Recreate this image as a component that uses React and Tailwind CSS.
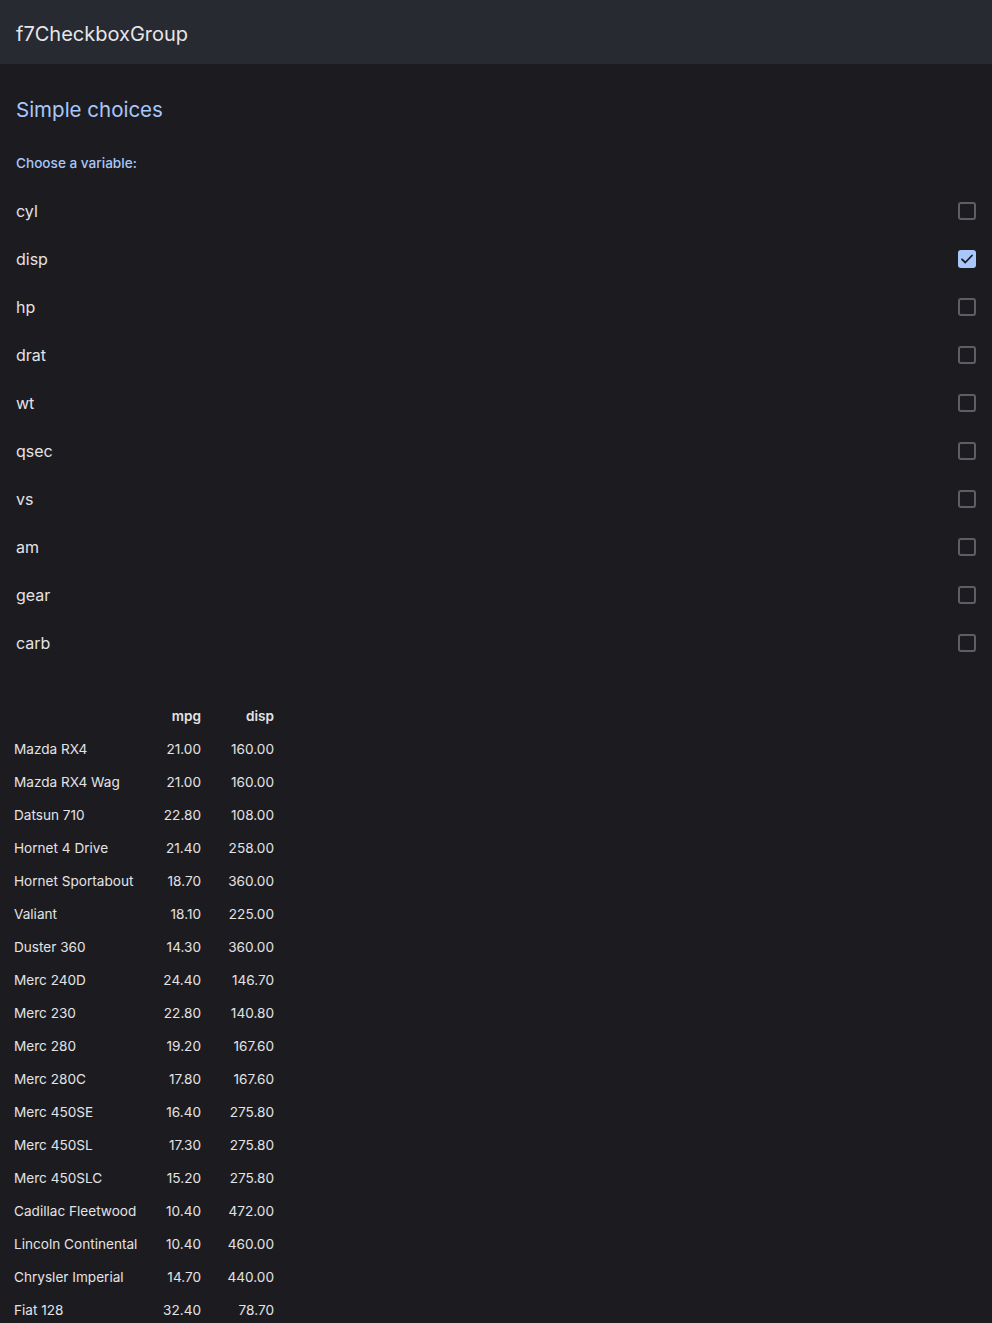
import React from 'react';

const vars = ['cyl', 'disp', 'hp', 'drat', 'wt', 'qsec', 'vs', 'am', 'gear', 'carb'];

const cars = [
  ['Mazda RX4', '21.00', '160.00'],
  ['Mazda RX4 Wag', '21.00', '160.00'],
  ['Datsun 710', '22.80', '108.00'],
  ['Hornet 4 Drive', '21.40', '258.00'],
  ['Hornet Sportabout', '18.70', '360.00'],
  ['Valiant', '18.10', '225.00'],
  ['Duster 360', '14.30', '360.00'],
  ['Merc 240D', '24.40', '146.70'],
  ['Merc 230', '22.80', '140.80'],
  ['Merc 280', '19.20', '167.60'],
  ['Merc 280C', '17.80', '167.60'],
  ['Merc 450SE', '16.40', '275.80'],
  ['Merc 450SL', '17.30', '275.80'],
  ['Merc 450SLC', '15.20', '275.80'],
  ['Cadillac Fleetwood', '10.40', '472.00'],
  ['Lincoln Continental', '10.40', '460.00'],
  ['Chrysler Imperial', '14.70', '440.00'],
  ['Fiat 128', '32.40', '78.70'],
  ['Honda Civic', '30.40', '75.70'],
];

function Checkbox({ checked }) {
  if (checked) {
    return (
      <span className="w-[18px] h-[18px] rounded-[3px] bg-[#a8c7fa] flex items-center justify-center">
        <svg width="16" height="16" viewBox="0 0 16 16" fill="none">
          <path d="M3 8.3l3.3 3.2 6.7-7" stroke="#1b1b1f" strokeWidth="1.8" strokeLinecap="round" strokeLinejoin="round" />
        </svg>
      </span>
    );
  }
  return <span className="w-[18px] h-[18px] rounded-[3px] border-2 border-[#5e5f64]" />;
}

export default function App() {
  return (
    <div className="min-h-screen bg-[#1c1c20] text-[#e3e3e6]" style={{ fontFamily: "Inter, 'Noto Sans', sans-serif" }}>
      {/* navbar */}
      <div className="h-16 bg-[#272a31] flex items-center px-4 pt-[3px]">
        <span className="text-[20px] text-[#e6e6ea]">f7CheckboxGroup</span>
      </div>

      <div className="pt-[30px]">
        <h2 className="px-4 text-[20.5px] leading-[32px] text-[#a8c7fa]">Simple choices</h2>
        <div className="px-4 mt-[26px] text-[13.6px] leading-[22px] font-medium text-[#a8c7fa]">Choose a variable:</div>

        <ul className="mt-[13px]">
          {vars.map((v) => (
            <li key={v} className="h-12 flex items-center justify-between pl-4 pr-4">
              <span className="text-[16px] text-[#e3e3e6]">{v}</span>
              <Checkbox checked={v === 'disp'} />
            </li>
          ))}
        </ul>

        <table className="mt-[33px] ml-2 text-[13.6px] border-collapse">
          <thead>
            <tr className="h-[33px]">
              <th className="w-[136px]" />
              <th className="w-[63px] px-[6px] text-right font-semibold">mpg</th>
              <th className="w-[73px] px-[6px] text-right font-semibold">disp</th>
            </tr>
          </thead>
          <tbody>
            {cars.map((c) => (
              <tr key={c[0]} className="h-[33px]">
                <td className="px-[6px] text-left whitespace-nowrap">{c[0]}</td>
                <td className="px-[6px] text-right">{c[1]}</td>
                <td className="px-[6px] text-right">{c[2]}</td>
              </tr>
            ))}
          </tbody>
        </table>
      </div>
    </div>
  );
}
